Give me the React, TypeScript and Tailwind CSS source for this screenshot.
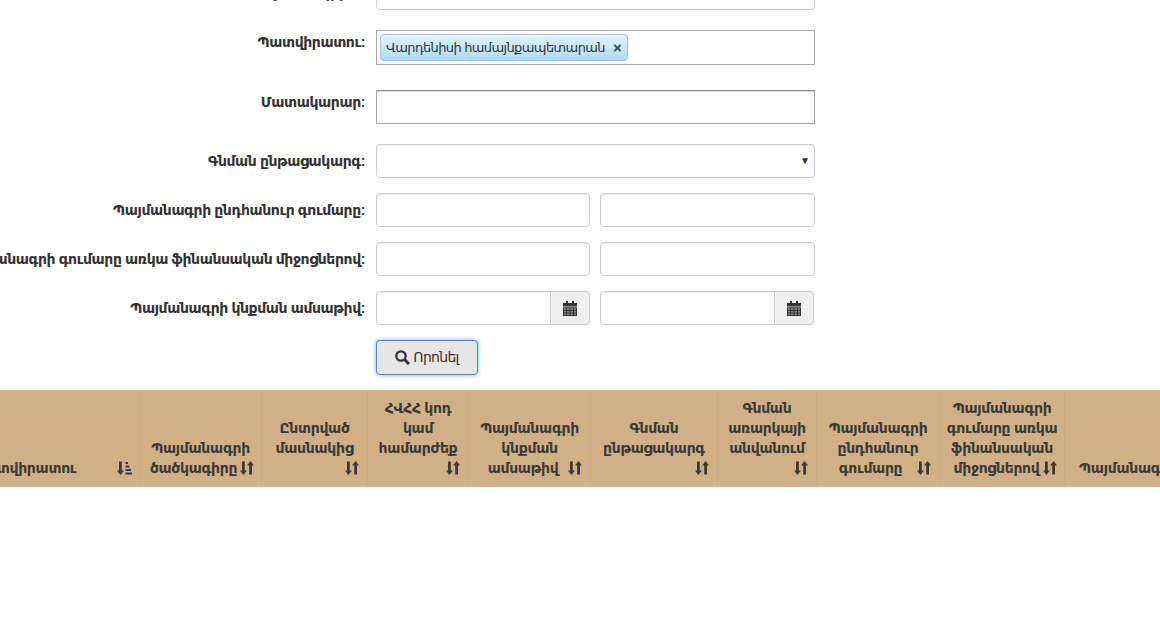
function Sort() {
  return (
    <svg width="14" height="14" viewBox="0 0 14 14" className="inline-block shrink-0" fill="#3a3a3a">
      <path d="M2 0.500h2.800v9h2.200l-3.600 4.500-3.400-4.500h2z" />
      <path d="M9.200 13.500h2.800v-9h2l-3.400-4.500-3.600 4.500h2.200z" />
    </svg>
  );
}
function SortActive() {
  return (
    <svg width="15" height="14" viewBox="0 0 15 14" className="inline-block shrink-0" fill="#3a3a3a">
      <path d="M2 0.500h2.800v9h2.200l-3.600 4.500-3.400-4.500h2z" />
      <path d="M8.500 1h2.500v2H8.500zM8.500 4.500h4v2h-4zM8.500 8h5.500v2H8.500zM8.500 11.500h6.500v2H8.500z" />
    </svg>
  );
}
function Calendar() {
  return (
    <svg width="14" height="15" viewBox="0 0 14 15">
      <path fill="#333" d="M3 0h2v2.500H3zM9 0h2v2.500H9zM0 2h14v3.500H0zM0 6.300h14V15H0z" />
      <path fill="#8a8a8a" d="M1 7.300h2v1.600H1zM4 7.300h2.500v1.600H4zM7.500 7.300H10v1.600H7.500zM11 7.300h2v1.600h-2zM1 10h2v1.500H1zM4 10h2.500v1.500H4zM7.500 10H10v1.500H7.500zM11 10h2v1.500h-2zM1 12.500h2V14H1zM4 12.500h2.500V14H4zM7.500 12.500H10V14H7.500zM11 12.500h2V14h-2z" />
    </svg>
  );
}
function Search() {
  return (
    <svg width="15" height="15" viewBox="0 0 15 15" fill="none" stroke="#333">
      <circle cx="6" cy="6" r="4.700" strokeWidth="2.300" />
      <path d="M9.500 9.500L14 14" strokeWidth="3" />
    </svg>
  );
}
function Label({ children, top = "pt-[7px]" }: { children: React.ReactNode; top?: string }) {
  return (
    <label className={`w-[366px] shrink-0 pr-px ${top} text-[14px] leading-[20px] font-bold tracking-[-0.4px] whitespace-nowrap text-[#333] flex justify-end`}>
      {children}
    </label>
  );
}
const inputCls = "h-[34px] rounded border border-[#ccc] bg-white shadow-[inset_0_1px_1px_rgba(0,0,0,0.075)]";
function Pair({ label, mb }: { label: string; mb: string }) {
  return (
    <div className={`flex gap-[10px] ${mb}`}>
      <Label>{label}</Label>
      <div className={`w-[214px] ${inputCls}`} />
      <div className={`w-[215px] ${inputCls}`} />
    </div>
  );
}
function DateBox() {
  return (
    <div className="flex w-[214px] h-[34px]">
      <div className="flex-1 rounded-l border border-[#ccc] bg-white shadow-[inset_0_1px_1px_rgba(0,0,0,0.075)]" />
      <div className="w-[40px] -ml-px flex items-center justify-center rounded-r border border-[#ccc] bg-[#eee]">
        <Calendar />
      </div>
    </div>
  );
}
const cols: { w: string; lines: string[]; ml?: string }[] = [
  { w: "w-[122px]", lines: ["Պայմանագրի", "ծածկագիրը"], ml: "ml-[3px] gap-[3px]" },
  { w: "w-[106px]", lines: ["Ընտրված", "մասնակից"] },
  { w: "w-[101px]", lines: ["ՀՎՀՀ կոդ", "կամ", "համարժեք"] },
  { w: "w-[122px]", lines: ["Պայմանագրի", "կնքման", "ամսաթիվ"], ml: "ml-[11px] gap-[10px]" },
  { w: "w-[127px]", lines: ["Գնման", "ընթացակարգ"] },
  { w: "w-[99px]", lines: ["Գնման", "առարկայի", "անվանում"] },
  { w: "w-[123px]", lines: ["Պայմանագրի", "ընդհանուր", "գումարը"], ml: "ml-[14px] gap-[15px]" },
  { w: "w-[125px]", lines: ["Պայմանագրի", "գումարը առկա", "ֆինանսական", "միջոցներով"], ml: "ml-[6px] gap-[3px]" },
];
export default function App() {
  return (
    <div className="w-[1160px] h-[620px] overflow-hidden bg-white text-[#333] font-['Liberation_Sans','DejaVu_Sans',sans-serif]">
      <div className="h-[390px] overflow-hidden">
        <div className="-mt-[24px] flex flex-col">
          <div className="flex gap-[10px] mb-[20px]">
            <Label>Պայմանագրի N:</Label>
            <div className={`w-[439px] ${inputCls}`} />
          </div>
          <div className="flex gap-[10px] mb-[25px]">
            <Label top="pt-[2px]">Պատվիրատու:</Label>
            <div className="w-[439px] h-[35px] border border-[#aaa] bg-white flex items-start pl-[3px] pt-[3px]">
              <div className="h-[27px] flex items-center gap-[8px] rounded-[4px] border border-[#9dc3e0] bg-gradient-to-b from-[#e4f4fd] to-[#a8dcf8] pl-[5px] pr-[6px] text-[13px] tracking-[-0.6px] text-[#333] whitespace-nowrap">
                <span>Վարդենիսի համայնքապետարան</span>
                <span className="text-[15px] font-bold leading-none text-[#444]">×</span>
              </div>
            </div>
          </div>
          <div className="flex gap-[10px] mb-[20px]">
            <Label top="pt-[2px]">Մատակարար:</Label>
            <div className="w-[439px] h-[34px] border border-[#aaa] border-t-[#888] bg-white shadow-[inset_0_1px_1px_rgba(0,0,0,0.15)]" />
          </div>
          <div className="flex gap-[10px] mb-[15px]">
            <Label>Գնման ընթացակարգ:</Label>
            <div className={`w-[439px] ${inputCls} flex items-center justify-end pr-[4px]`}>
              <span className="text-[10px] leading-none text-[#333] -mt-[1px]">▼</span>
            </div>
          </div>
          <Pair label="Պայմանագրի ընդհանուր գումարը:" mb="mb-[15px]" />
          <Pair label="Պայմանագրի գումարը առկա ֆինանսական միջոցներով:" mb="mb-[15px]" />
          <div className="flex gap-[10px] mb-[15px]">
            <Label>Պայմանագրի կնքման ամսաթիվ:</Label>
            <DateBox />
            <DateBox />
          </div>
          <div className="flex">
            <div className="w-[376px] shrink-0" />
            <button className="w-[102px] h-[35px] rounded border border-[#4a86c5] bg-[#e6e6e6] shadow-[0_0_4px_rgba(102,175,233,0.9)] flex items-center justify-center gap-[3px] text-[14px] tracking-[-0.7px] text-[#333]">
              <Search />
              <span>Որոնել</span>
            </button>
          </div>
        </div>
      </div>
      <div className="h-[97px] flex bg-[#d0b084] border-b border-[#c4c09a] whitespace-nowrap text-[14px] leading-[20px] text-[#3a3a3a] tracking-[-0.3px]">
        <div className="w-[141px] shrink-0 -ml-[1px] overflow-hidden border-r border-[#c9aa80] flex items-end justify-end pb-[11px] pr-[7px] relative">
          <span className="absolute left-[-27px] bottom-[8px] font-bold">Պատվիրատու</span>
          <SortActive />
        </div>
        {cols.map((c, i) => (
          <div key={i} className={`${c.w} shrink-0 border-r border-[#c9aa80] flex flex-col justify-end items-center pb-[8px] px-[8px] font-bold text-center`}>
            {c.lines.map((l, j) => (
              <div key={j} className={`flex items-center ${c.ml && j === c.lines.length - 1 ? c.ml : ""}`}>
                {l}
                {c.ml && j === c.lines.length - 1 ? <Sort /> : null}
              </div>
            ))}
            {!c.ml ? <div className="self-end flex h-[20px] items-center"><Sort /></div> : null}
          </div>
        ))}
        <div className="flex-1 flex items-end pb-[8px] pl-[14px] font-bold overflow-hidden">Պայմանագրի</div>
      </div>
    </div>
  );
}
